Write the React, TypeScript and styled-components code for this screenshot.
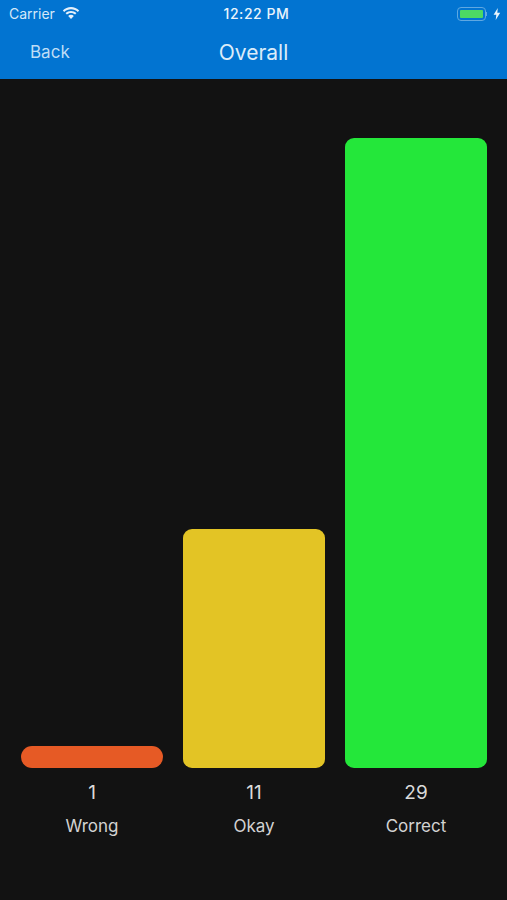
import React from "react";
import styled, { createGlobalStyle } from "styled-components";

type Result = {
    label: string,
    count: number,
    color: string,
    barHeight: number,
    barRadius: number
}

const RESULTS: Result[] = [
    {label: 'Wrong', count: 1, color: '#E65A25', barHeight: 22, barRadius: 11},
    {label: 'Okay', count: 11, color: '#E3C425', barHeight: 239, barRadius: 9},
    {label: 'Correct', count: 29, color: '#24E73A', barHeight: 630, barRadius: 9}
];

const WifiIcon = () => (
    <svg width="18" height="13" viewBox="0 0 18 13">
        <path d="M9 2.2c2.6 0 5 1 6.8 2.7L17.2 3.4C15 1.300 12.100 0 9 0S3 1.300.8 3.400l1.400 1.500C4 3.200 6.400 2.200 9 2.200z" fill="#E4F0FB"/>
        <path d="M9 6c1.600 0 3 .6 4.100 1.600l1.400-1.500C13 4.700 11.100 3.900 9 3.900s-4 .8-5.500 2.200l1.400 1.500C6 6.600 7.400 6 9 6z" fill="#E4F0FB"/>
        <path d="M9 7.800c-1.100 0-2.100.4-2.800 1.100L9 12l2.800-3.100C11.100 8.200 10.100 7.800 9 7.800z" fill="#E4F0FB"/>
    </svg>
);

const BoltIcon = () => (
    <svg width="8" height="12" viewBox="0 0 8 12">
        <path d="M4.800 0L.6 6.800h2.700L2.700 12l4.500-7.200H4.300z" fill="#EAF4FC"/>
    </svg>
);

export default function App() {
    return (
        <Screen>
            <GlobalStyle/>
            <Header>
                <StatusBar>
                    <StatusLeft>
                        <CarrierText>Carrier</CarrierText>
                        <WifiIcon/>
                    </StatusLeft>
                    <ClockText>12:22 PM</ClockText>
                    <StatusRight>
                        <Battery>
                            <BatteryFill/>
                        </Battery>
                        <BatteryCap/>
                        <BoltIcon/>
                    </StatusRight>
                </StatusBar>
                <NavBar>
                    <BackButton>Back</BackButton>
                    <NavTitle>Overall</NavTitle>
                    <span/>
                </NavBar>
            </Header>
            <Chart>
                {RESULTS.map(result => (
                    <Column key={result.label}>
                        <Bar $color={result.color} $height={result.barHeight} $radius={result.barRadius}/>
                        <CountText>{result.count}</CountText>
                        <LabelText>{result.label}</LabelText>
                    </Column>
                ))}
            </Chart>
        </Screen>
    );
}

//style

const GlobalStyle = createGlobalStyle`
    html, body {
        margin: 0;
        padding: 0;
        background-color: #121212;
    }
`;

const Screen = styled.div`
    width: 507px;
    height: 900px;
    display: flex;
    flex-direction: column;
    background-color: #121212;
    font-family: "Inter", "Liberation Sans", sans-serif;
    overflow: hidden;
`;

const Header = styled.div`
    height: 79px;
    flex-shrink: 0;
    background-color: #0274D1;
    display: flex;
    flex-direction: column;
`;

const StatusBar = styled.div`
    height: 27px;
    display: grid;
    grid-template-columns: 1fr auto 1fr;
    align-items: center;
    padding: 0 3px 0 9px;
`;

const StatusLeft = styled.div`
    display: flex;
    align-items: center;
    gap: 7px;
`;

const CarrierText = styled.span`
    color: #D5E8F8;
    font-size: 14px;
`;

const ClockText = styled.span`
    color: #EAF4FC;
    font-size: 14px;
    font-weight: 500;
    letter-spacing: 0.55px;
`;

const StatusRight = styled.div`
    display: flex;
    align-items: center;
    justify-content: flex-end;
    padding-right: 3px;
`;

const Battery = styled.div`
    width: 29px;
    height: 14px;
    box-sizing: border-box;
    padding: 2px;
    border: 1.5px solid #5FA8E2;
    border-radius: 4px;
`;

const BatteryFill = styled.div`
    width: 100%;
    height: 100%;
    background-color: #4CD964;
    border-radius: 1px;
`;

const BatteryCap = styled.div`
    width: 1.5px;
    height: 4px;
    margin-right: 6px;
    background-color: #5FA8E2;
`;

const NavBar = styled.div`
    flex: 1;
    display: grid;
    grid-template-columns: 1fr auto 1fr;
    align-items: center;
    padding-bottom: 2px;
`;

const BackButton = styled.span`
    margin-left: 30px;
    color: #BFDDF6;
    font-size: 17px;
`;

const NavTitle = styled.span`
    color: #DCECF9;
    font-size: 21px;
`;

const Chart = styled.div`
    display: grid;
    grid-template-columns: repeat(3, 142px);
    column-gap: 20px;
    padding: 59px 20px 0 21px;
    height: 689px;
    align-items: end;
`;

const Column = styled.div`
    height: 100%;
    display: flex;
    flex-direction: column;
    align-items: center;
    justify-content: flex-end;
`;

const Bar = styled.div<{ $color: string, $height: number, $radius: number }>`
    width: 100%;
    height: ${props => props.$height}px;
    background-color: ${props => props.$color};
    border-radius: ${props => props.$radius}px;
`;

const CountText = styled.div`
    margin-top: 14px;
    color: #DADADA;
    font-size: 19px;
    line-height: 22px;
`;

const LabelText = styled.div`
    margin-top: 11px;
    color: #D2D2D2;
    font-size: 17px;
    line-height: 22px;
`;
